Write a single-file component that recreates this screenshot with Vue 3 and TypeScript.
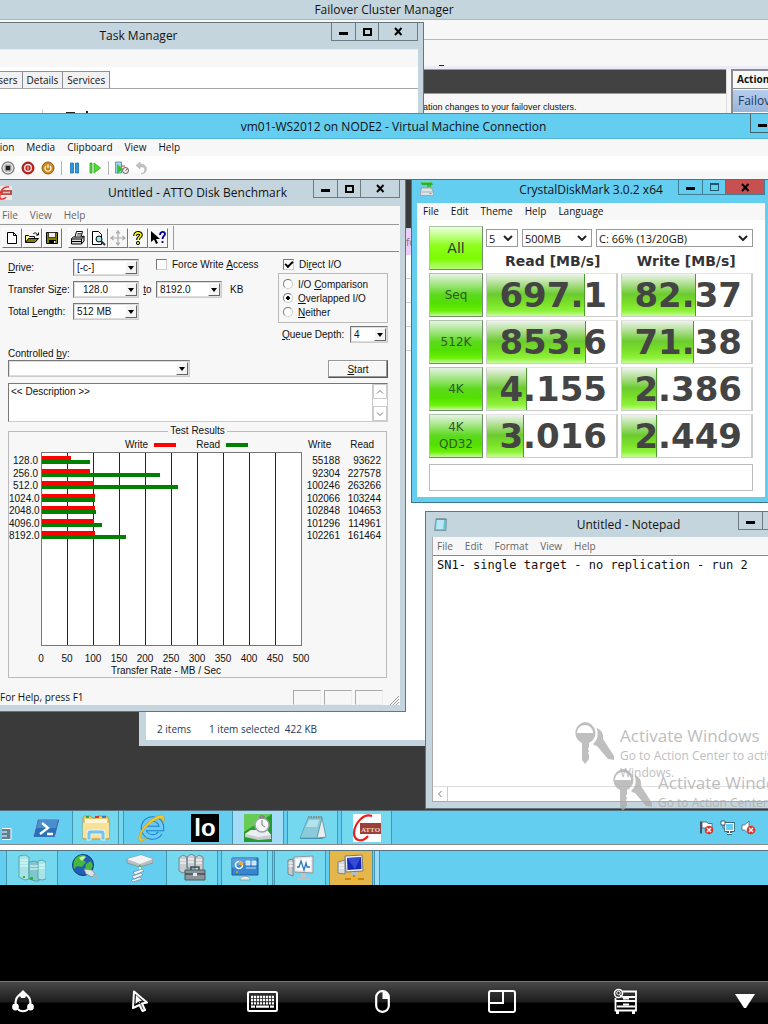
<script setup lang="ts">
import { ref } from 'vue'

interface AttoRow { size: string; write: number; read: number }
interface CrystalRow { label: string[]; read: string; readPct: number; write: string; writePct: number }

const attoRows: AttoRow[] = [
  { size: '128.0', write: 55188, read: 93622 },
  { size: '256.0', write: 92304, read: 227578 },
  { size: '512.0', write: 100246, read: 263266 },
  { size: '1024.0', write: 102066, read: 103244 },
  { size: '2048.0', write: 102848, read: 104653 },
  { size: '4096.0', write: 101296, read: 114961 },
  { size: '8192.0', write: 102261, read: 161464 },
]
const ticks: number[] = [0, 50, 100, 150, 200, 250, 300, 350, 400, 450, 500]
const pct = (kb: number): string => `${kb / 5000}%`

const crystalRows: CrystalRow[] = [
  { label: ['Seq'], read: '697.1', readPct: 76, write: '82.37', writePct: 57 },
  { label: ['512K'], read: '853.6', readPct: 77, write: '71.38', writePct: 56 },
  { label: ['4K'], read: '4.155', readPct: 31, write: '2.386', writePct: 27 },
  { label: ['4K', 'QD32'], read: '3.016', readPct: 29, write: '2.449', writePct: 27 },
]

const vmMenu: string[] = ['Action', 'Media', 'Clipboard', 'View', 'Help']
const attoMenu: string[] = ['File', 'View', 'Help']
const crystalMenu: string[] = ['File', 'Edit', 'Theme', 'Help', 'Language']
const notepadMenu: string[] = ['File', 'Edit', 'Format', 'View', 'Help']

const ioMode = ref<string>('overlapped')
const directIo = ref<boolean>(true)
const forceWrite = ref<boolean>(false)
const description = ref<string>('<< Description >>')
const note = ref<string>('SN1- single target - no replication - run 2')
</script>

<template>
  <div class="page">
    <!-- Host: Failover Cluster Manager with Task Manager in front -->
    <section class="failover">
      <header class="fc-title">Failover Cluster Manager</header>
      <div class="fc-menu"></div>
      <div class="fc-tools"><i></i></div>
      <div class="fc-body">
        <div class="fc-main">
          <div class="fc-band"></div>
          <p class="fc-text">ation changes to your failover clusters.</p>
        </div>
        <aside class="fc-actions">
          <h2>Actions</h2>
          <a href="#">Failover Cluster Manager</a>
        </aside>
      </div>

      <section class="win taskman">
        <header class="title">
          <span class="caption">Task Manager</span>
          <div class="ctl">
            <button aria-label="Minimize"><i class="g-min"></i></button>
            <button aria-label="Maximize"><i class="g-max"></i></button>
            <button class="wide" aria-label="Close"><svg viewBox="0 0 9 9"><path d="M1 1l6.500 7M7.500 1L1 8" /></svg></button>
          </div>
        </header>
        <div class="tm-body">
          <div class="tm-menu"></div>
          <div class="tm-tabs">
            <button>Users</button><button>Details</button><button>Services</button>
          </div>
          <div class="tm-pane"><i class="tm-a"></i><i class="tm-b"></i><i class="tm-c"></i></div>
        </div>
      </section>
    </section>

    <!-- Host: Virtual Machine Connection -->
    <section class="vm">
      <header class="vm-title">
        <span>vm01-WS2012 on NODE2 - Virtual Machine Connection</span>
        <button aria-label="Minimize"><i class="g-min"></i></button>
      </header>
      <nav class="menu vm-menu">
        <a v-for="m in vmMenu" :key="m" href="#">{{ m }}</a>
      </nav>
      <div class="vm-tools">
        <button aria-label="Turn off">
          <svg viewBox="0 0 14 14"><circle cx="7" cy="7" r="6" fill="#eee" stroke="#8a8a8a" stroke-width="1.500" /><circle cx="7" cy="7" r="4" fill="#fff" stroke="#bbb" /><path d="M4.500 4.500h5v5h-5z" fill="#222" /></svg>
        </button>
        <button aria-label="Shut down">
          <svg viewBox="0 0 14 14"><circle cx="7" cy="7" r="6" fill="#c5261f" stroke="#8e1a15" /><circle cx="7" cy="7" r="3.300" fill="none" stroke="#fff" stroke-width="1.200" /><path d="M7 5.500v3" stroke="#fff" /></svg>
        </button>
        <button aria-label="Save">
          <svg viewBox="0 0 14 14"><circle cx="7" cy="7" r="6" fill="#d08a1c" stroke="#8b5a10" /><path d="M5 5a3 3 0 1 0 4 0M7 3.500v3.500" fill="none" stroke="#fff" stroke-width="1.200" /></svg>
        </button>
        <i class="vsep"></i>
        <button aria-label="Pause">
          <svg viewBox="0 0 14 14"><path d="M2.500 2h3v10h-3zM7.500 2h3v10h-3z" fill="#2b9be0" stroke="#1c6fb0" stroke-width=".8" /></svg>
        </button>
        <button aria-label="Reset">
          <svg viewBox="0 0 14 14"><path d="M2 2h2v10H2zM6 2l6.500 5L6 12z" fill="#55dd3c" stroke="#2ba31c" stroke-width=".8" /></svg>
        </button>
        <i class="vsep"></i>
        <button aria-label="Checkpoint">
          <svg viewBox="0 0 14 14"><path d="M.500 1h6v11h-6z" fill="#9fd8e6" stroke="#4d8aa0" stroke-width=".8" /><path d="M2 3l6 5-6 5z" fill="#38c52a" /><circle cx="10.500" cy="9.500" r="3" fill="#eee" stroke="#555" /><path d="M10.500 9.500L12.500 8M6 5h4" stroke="#c33" /></svg>
        </button>
        <button aria-label="Revert">
          <svg viewBox="0 0 14 14"><path d="M5 1L1 4.500 5 8V6c4-.5 6 1 4 5.500L6 13c7 0 8-10-1-10z" fill="#c2c2c2" stroke="#b4b4b4" stroke-width=".6" /></svg>
        </button>
      </div>

      <!-- Guest desktop -->
      <div class="desktop">
        <section class="win explorer">
          <div class="ex-body">
            <div class="ex-side"><b>fo</b><i></i><i></i><i></i><i></i></div>
            <footer class="ex-status"><span>2 items</span><span>1 item selected&nbsp; 422 KB</span></footer>
          </div>
        </section>

        <!-- ATTO -->
        <section class="win atto">
          <header class="title">
            <svg class="atto-ico" viewBox="0 0 14 14"><path d="M0 0h14v14H0z" fill="#f4e4e4" /><path d="M11 1C5 0 1 6 2 12c1 2 5 1 6-1" fill="none" stroke="#f02828" stroke-width="1.400" /><path d="M3 4h11v5H3z" fill="#b2544e" /><path d="M5 6.500h7" stroke="#e8b8b4" stroke-width="1.500" /></svg>
            <span class="caption">Untitled - ATTO Disk Benchmark</span>
            <div class="ctl">
              <button aria-label="Minimize"><i class="g-min"></i></button>
              <button aria-label="Maximize"><i class="g-max"></i></button>
              <button class="wide" aria-label="Close"><svg viewBox="0 0 9 9"><path d="M1 1l6.500 7M7.500 1L1 8" /></svg></button>
            </div>
          </header>
          <div class="atto-body">
            <nav class="menu grey atto-menu"><a v-for="m in attoMenu" :key="m" href="#">{{ m }}</a></nav>
            <div class="atto-tools">
              <button aria-label="New"><svg viewBox="0 0 16 16"><path d="M3.500 2.500h6l3 3v8h-9zM9.500 2.500v3h3" fill="#fff" stroke="#000" /></svg></button>
              <button aria-label="Open"><svg viewBox="0 0 16 16"><path d="M1.500 12.500v-7h3l1 1h5v2" fill="#ffff80" stroke="#000" /><path d="M1.500 12.500l3-4h10l-3.500 4z" fill="#808000" stroke="#000" /><path d="M9 4c2-2 4-1 4.500 1M12 5h2.500V2.500" fill="none" stroke="#000" /></svg></button>
              <button aria-label="Save"><svg viewBox="0 0 16 16"><path d="M2.500 2.500h11v11h-11z" fill="#808000" stroke="#000" /><path d="M4.500 2.500h7v5h-7z" fill="#eee" stroke="#000" stroke-width=".6" /><path d="M5 10h7v4H5z" /><path d="M10 11h1.500v2H10z" fill="#fff" /></svg></button>
              <i class="tgap"></i>
              <button aria-label="Print"><svg viewBox="0 0 16 16"><path d="M5 7l1.500-5.500h6L11 7" fill="#fff" stroke="#000" /><path d="M7.500 3.500h4M7 5h4" stroke="#000" stroke-width=".7" /><path d="M1.500 8.500l2-1.500h8l2.500-1v5l-2.500 3h-10z" fill="#ddd" stroke="#000" /><path d="M2 9h9.500M2 11.500h9.500M11.500 9v5M11.500 9L14 6.500" fill="none" stroke="#000" /></svg></button>
              <button aria-label="Print preview"><svg viewBox="0 0 16 16"><path d="M2.500 1.500h6l3 3v10h-9z" fill="#fff" stroke="#000" /><circle cx="9" cy="9" r="3" fill="#a0e8e8" stroke="#000" /><path d="M11 11l4 4" stroke="#333" stroke-width="2" /></svg></button>
              <button aria-label="Move"><svg viewBox="0 0 16 16"><path d="M8 1v14M1 8h14M6 3.500L8 1l2 2.500M6 12.500L8 15l2-2.500M3.500 6L1 8l2.500 2M12.500 6L15 8l-2.500 2" fill="none" stroke="#aaa" stroke-width="1.200" /></svg></button>
              <button aria-label="About"><svg viewBox="0 0 16 16"><path d="M5 6c0-4 6-4 6-1 0 2-3 2-3 5" fill="none" stroke="#000" stroke-width="3.600" /><path d="M5 6c0-4 6-4 6-1 0 2-3 2-3 5" fill="none" stroke="#ffff00" stroke-width="1.600" /><circle cx="8" cy="13" r="1.600" fill="#ff0" stroke="#000" /></svg></button>
              <button aria-label="Context help"><svg viewBox="0 0 16 16"><path d="M1 1v11l3-2.500L6 14l2-1-2-4h4z" /><path d="M10 5c0-4 5-4 5-1 0 2-2.500 2-2.500 5M12.500 11v2" fill="none" stroke="#00008b" stroke-width="1.800" /></svg></button>
              <i class="tend"></i>
            </div>

            <form class="atto-form" @submit.prevent>
              <div class="top">
                <div class="left">
                  <div class="row">
                    <label class="lab" for="drive"><u>D</u>rive:</label>
                    <div class="combo w66"><select id="drive"><option>[-c-]</option></select><i class="arr"></i></div>
                    <label class="check fwa"><input v-model="forceWrite" type="checkbox">Force Write <u>A</u>ccess</label>
                  </div>
                  <div class="row">
                    <label class="lab" for="from">Transfer Si<u>z</u>e:</label>
                    <div class="combo w66 ind"><select id="from"><option>128.0</option></select><i class="arr"></i></div>
                    <label class="to" for="upto"><u>t</u>o</label>
                    <div class="combo w66"><select id="upto"><option>8192.0</option></select><i class="arr"></i></div>
                    <span class="kb">KB</span>
                  </div>
                  <div class="row">
                    <label class="lab" for="total">Total <u>L</u>ength:</label>
                    <div class="combo w66"><select id="total"><option>512 MB</option></select><i class="arr"></i></div>
                  </div>
                </div>
                <div class="right">
                  <label class="check dio"><input v-model="directIo" type="checkbox">Di<u>r</u>ect I/O</label>
                  <div class="modes">
                    <label><input v-model="ioMode" type="radio" name="io" value="comparison">I/O <u>C</u>omparison</label>
                    <label><input v-model="ioMode" type="radio" name="io" value="overlapped"><span><u>O</u>verlapped I/O</span></label>
                    <label><input v-model="ioMode" type="radio" name="io" value="neither"><span><u>N</u>either</span></label>
                  </div>
                  <div class="queue">
                    <label for="queue"><u>Q</u>ueue Depth:</label>
                    <div class="combo w38"><select id="queue"><option>4</option></select><i class="arr"></i></div>
                  </div>
                </div>
              </div>
              <label class="ctrl" for="controlled">Controlled <u>b</u>y:</label>
              <div class="startrow">
                <div class="combo w182"><select id="controlled"><option></option></select><i class="arr"></i></div>
                <button class="start"><u>S</u>tart</button>
              </div>
              <div class="desc">
                <textarea v-model="description" aria-label="Description"></textarea>
                <div class="dscroll">
                  <button aria-label="Scroll up"><svg viewBox="0 0 8 8"><path d="M1 5.500L4 2.500l3 3" /></svg></button>
                  <button aria-label="Scroll down"><svg viewBox="0 0 8 8"><path d="M1 2.500L4 5.500l3-3" /></svg></button>
                </div>
              </div>
            </form>

            <fieldset class="results">
              <legend>Test Results</legend>
              <div class="legend">
                <span>Write</span><i class="red"></i><span>Read</span><i class="green"></i>
                <b class="hw">Write</b><b class="hr">Read</b>
              </div>
              <div class="chart">
                <div class="col sizes"><span v-for="r in attoRows" :key="r.size">{{ r.size }}</span></div>
                <div class="plot">
                  <div class="bars">
                    <div v-for="r in attoRows" :key="r.size" class="pair">
                      <i class="red" :style="{ width: pct(r.write) }"></i>
                      <i class="green" :style="{ width: pct(r.read) }"></i>
                    </div>
                  </div>
                </div>
                <div class="col"><span v-for="r in attoRows" :key="r.size">{{ r.write }}</span></div>
                <div class="col"><span v-for="r in attoRows" :key="r.size">{{ r.read }}</span></div>
              </div>
              <div class="axis"><span v-for="t in ticks" :key="t">{{ t }}</span></div>
              <div class="axlabel">Transfer Rate - MB / Sec</div>
            </fieldset>

            <footer class="atto-status">
              <span>For Help, press F1</span><i></i><i></i><i></i>
              <svg viewBox="0 0 10 10"><path d="M1 10l9-9M4 10l6-6M7 10l3-3" stroke="#999" /></svg>
            </footer>
          </div>
        </section>

        <!-- CrystalDiskMark -->
        <section class="win crystal">
          <header class="title">
            <svg class="cdm-ico" viewBox="0 0 15 15"><path d="M1 0h11l2 4H3z" fill="#2fae2a" /><path d="M1 0h11l1 1.500H1.500z" fill="#8be07c" /><path d="M8 4h4v2H8z" fill="#3fbf38" /><path d="M2.500 7h10l2 4v3.500h-13V11z" fill="#dfe3e6" stroke="#8b979d" stroke-width=".7" /><path d="M1.500 11h13" stroke="#a9b2b7" /><path d="M10.500 12.500h2" stroke="#4fbf4a" /></svg>
            <span class="caption">CrystalDiskMark 3.0.2 x64</span>
            <div class="ctl">
              <button aria-label="Minimize"><i class="g-min"></i></button>
              <button class="off" aria-label="Maximize"><i class="g-max"></i></button>
              <button class="wide close" aria-label="Close"><svg viewBox="0 0 9 9"><path d="M1 1l6.500 7M7.500 1L1 8" /></svg></button>
            </div>
          </header>
          <div class="cdm-body">
            <nav class="menu cdm-menu"><a v-for="m in crystalMenu" :key="m" href="#">{{ m }}</a></nav>
            <div class="cdm-grid">
              <button class="gb all">All</button>
              <div class="cdm-head">
                <div class="pickers">
                  <div class="pick p1"><select aria-label="Test count"><option>5</option></select><svg viewBox="0 0 10 6"><path d="M1 1l4 4 4-4" /></svg></div>
                  <div class="pick p2"><select aria-label="Test size"><option>500MB</option></select><svg viewBox="0 0 10 6"><path d="M1 1l4 4 4-4" /></svg></div>
                  <div class="pick p3"><select aria-label="Drive"><option>C: 66% (13/20GB)</option></select><svg viewBox="0 0 10 6"><path d="M1 1l4 4 4-4" /></svg></div>
                </div>
                <div class="heads"><b>Read [MB/s]</b><b>Write [MB/s]</b></div>
              </div>
              <template v-for="r in crystalRows" :key="r.read">
                <button class="gb"><span v-for="l in r.label" :key="l">{{ l }}</span></button>
                <div class="cell"><i :style="{ width: r.readPct + '%' }"></i><b>{{ r.read }}</b></div>
                <div class="cell"><i :style="{ width: r.writePct + '%' }"></i><b>{{ r.write }}</b></div>
              </template>
            </div>
            <input class="cdm-note" type="text" aria-label="Comment">
          </div>
        </section>

        <!-- Notepad -->
        <section class="win notepad">
          <header class="title">
            <svg class="np-ico" viewBox="0 0 14 14"><path d="M2 2h10.500l-.5 11.500H.500z" fill="#6fc4d8" stroke="#6a8a94" stroke-width=".7" /><path d="M3 3h7l-1 9H2z" fill="#b9e8f2" /><path d="M3 1v2M5 1v2M7 1v2M9 1v2M11 1v2" stroke="#66777d" stroke-width=".8" /></svg>
            <span class="caption">Untitled - Notepad</span>
            <div class="ctl">
              <button aria-label="Minimize"><i class="g-min"></i></button>
              <button aria-label="Maximize"><i class="g-max"></i></button>
              <button class="wide" aria-label="Close"><svg viewBox="0 0 9 9"><path d="M1 1l6.500 7M7.500 1L1 8" /></svg></button>
            </div>
          </header>
          <div class="np-body">
            <nav class="menu grey np-menu"><a v-for="m in notepadMenu" :key="m" href="#">{{ m }}</a></nav>
            <textarea v-model="note" aria-label="Text" spellcheck="false"></textarea>
            <div class="np-scroll"><button aria-label="Scroll left"><svg viewBox="0 0 8 8"><path d="M5.500 1L2.500 4l3 3" /></svg></button></div>
          </div>
        </section>

        <!-- Activation watermarks: host and guest -->
        <div v-for="n in 2" :key="n" class="mark" :class="'mark' + n">
          <svg viewBox="0 0 40 42">
            <path d="M22 6c5 1 8 6 7 11l2 3 9 14v4l-6-1-11-13c-1 0-3-1-4-2 5-4 6-11 3-17z" />
            <path fill-rule="evenodd" d="M11 0a11 11 0 0 1 4 21v4l-1 2 1 2-1 2 1 2v4l-4 5-3-4V21A11 11 0 0 1 11 0zM3 11h16c0-5-4-8-8-8s-8 3-8 8z" />
          </svg>
          <div><strong>Activate Windows</strong><span>Go to Action Center to activate</span><span v-if="n === 1">Windows.</span></div>
        </div>
      </div>

      <!-- Guest taskbar -->
      <nav class="bar guest">
        <button class="s20" aria-label="Server Manager"><svg class="clip" viewBox="0 0 10 12"><path d="M-1 .500h10v11H-1z" fill="#5b8196" stroke="#fff" /><path d="M0 4h5M0 8h5" stroke="#fff" /></svg></button>
        <button class="s52" aria-label="PowerShell">
          <svg class="i28" viewBox="0 0 28 28"><path d="M7 5h19a1.500 1.500 0 0 1 1.500 2l-4 15a2 2 0 0 1-2 1.500H3A1.500 1.500 0 0 1 1.500 21L5 7a2 2 0 0 1 2-2z" fill="#2a70b8" stroke="#8cc3ea" /><path d="M7 6h19l-2 8H4z" fill="#5fa3dc" opacity=".6" /><path d="M10 9l6 5-8 6M15 20h6" fill="none" stroke="#fff" stroke-width="2.400" /></svg>
        </button>
        <button class="s47 open stack" aria-label="File Explorer">
          <svg class="i28" viewBox="0 0 28 28"><path d="M1 4l1-2h7l1 2h4l1-2h10l2 3v20H1z" fill="#ecca72" stroke="#b98f35" stroke-width=".8" /><path d="M3 5h22v4H3z" fill="#fff6cf" /><path d="M4 2h3v2H4z" fill="#2ca34c" /><path d="M13 2h4v2h-4z" fill="#d33" /><path d="M20 2h4v2h-4z" fill="#2b7fd0" /><path d="M1 9h26v15H1z" fill="#f7e29a" /><path d="M5 26v-7a3 3 0 0 1 3-3h12a3 3 0 0 1 3 3v7h-4v-6H9v6z" fill="#78c4ea" stroke="#e6f6ff" stroke-width=".9" /></svg>
        </button>
        <button class="s54" aria-label="Internet Explorer">
          <svg class="i28" viewBox="0 0 28 28"><path d="M23 19a9 9 0 1 1 1.500-4.500H8" fill="none" stroke="#1a7fc8" stroke-width="5.500" /><path d="M23 19a9 9 0 1 1 1.500-4.500H8" fill="none" stroke="#6ccbf6" stroke-width="3.500" /><path d="M3 27C-3 21 14 2 24 1c4 0 4 5 2 8 0-4-1-6-5-4C11 9 2 20 4 24c1 2 4 1 7-1-3 3-6 5-8 4z" fill="#f6c92c" stroke="#c48f12" stroke-width=".5" /></svg>
        </button>
        <button class="s54" aria-label="Iometer"><span class="lo">lo</span></button>
        <button class="s52 open active" aria-label="CrystalDiskMark">
          <svg class="i28" viewBox="0 0 28 28"><path d="M0 0h28v28H0z" fill="#259a2d" /><path d="M28 0L0 18V0z" fill="#67cb55" /><path d="M1 20l6-4h16l4 5v4l-13 1-13-3z" fill="#c7ccd0" /><path d="M1 20l6-4h16l4 5-13 2z" fill="#eceff1" /><circle cx="18" cy="11" r="7" fill="#f5f7f8" stroke="#9aa5a9" stroke-width="1.500" /><path d="M18 11V6M18 11l3 2M16 2h4v2h-4z" stroke="#777" fill="#aaa" /></svg>
        </button>
        <button class="s50 open shift" aria-label="Notepad">
          <svg class="i28" viewBox="0 0 28 28"><path d="M9 4h14l4 19-4 2H1z" fill="#3e93ad" /><path d="M9 4h14l-5 20H1z" fill="#8acbdb" stroke="#4f9db2" stroke-width=".7" /><path d="M10 6h10l-2 7H7z" fill="#d2f1f6" opacity=".6" /><path d="M23 4l4 19-9 1z" fill="#e6eef0" stroke="#5f8d9b" stroke-width=".7" /><path d="M9 3h15" stroke="#8b8a7a" stroke-width="2" stroke-dasharray="1.500 1" /></svg>
        </button>
        <button class="s50 open shift" aria-label="ATTO Disk Benchmark">
          <svg class="i28" viewBox="0 0 28 28"><path d="M0 0h28v28H0z" fill="#fff" /><path d="M19 2C10-1 1 10 1 20c1 8 9 8 14 2" fill="none" stroke="#ee1c1c" stroke-width="2.200" /><path d="M7 9h21v11H7z" fill="#9c3f39" /><text x="17.500" y="17.500" text-anchor="middle" font-size="7" font-weight="bold" font-family="Liberation Serif, serif" fill="#e9d3cf">ATTO</text></svg>
        </button>
        <div class="tray">
          <button aria-label="Action Center"><svg viewBox="0 0 15 15"><path d="M2 1.500v12" stroke="#456" stroke-width="2" /><path d="M3 2h5l1 1.500h4V9H8L7 8H3z" fill="#fff" stroke="#456" stroke-width=".8" /><circle cx="10" cy="10" r="4.300" fill="#e03428" /><path d="M8 8l4 4M12 8l-4 4" stroke="#fff" stroke-width="1.400" /></svg></button>
          <button aria-label="Network"><svg viewBox="0 0 15 15"><path d="M5.500 3.500h8v7h-8zM9.500 10.500v3M7 13.500h5" fill="#63cef0" stroke="#345" stroke-width="2.400" /><path d="M5.500 3.500h8v7h-8zM9.500 10.500v3M7 13.500h5" fill="#63cef0" stroke="#fff" stroke-width="1.200" /><path d="M1 1h4v4H1zM3 5v3h2" fill="#fff" stroke="#345" stroke-width=".8" /></svg></button>
          <button aria-label="Volume"><svg viewBox="0 0 15 15"><path d="M1 5h2.500L8 1v13l-4.500-4H1z" fill="#fff" stroke="#567" stroke-width=".8" /><circle cx="10" cy="10" r="4.300" fill="#e03428" /><path d="M8 8l4 4M12 8l-4 4" stroke="#fff" stroke-width="1.400" /></svg></button>
        </div>
      </nav>
    </section>

    <div class="gapline"></div>

    <!-- Host taskbar -->
    <nav class="bar host">
      <button class="s52 open lead" aria-label="Server Manager">
        <svg class="i28" viewBox="0 0 28 28"><path d="M1 2l6-1 4 2v22l-4 1-6-3z" fill="#a8e3e6" stroke="#4c9aa2" stroke-width=".8" /><path d="M11 8l6-1 4 2v18l-4 0-6-2z" fill="#7fc6cd" stroke="#4c9aa2" stroke-width=".8" /><path d="M20 7l4-1 4 2v17l-4 1-4-1z" fill="#a8e3e6" stroke="#4c9aa2" stroke-width=".8" /><path d="M2 6h8M2 9h8M2 12h8M12 12h8M12 15h8M21 11h6M21 14h6" stroke="#e8ffff" /><path d="M12 23h3v3h-3zM5 22h2v2H5z" fill="#28b838" /></svg>
      </button>
      <button class="s54" aria-label="Network">
        <svg class="i28" viewBox="0 0 28 28"><circle cx="12" cy="11" r="10.500" fill="#1d5fb4" stroke="#0d3a78" /><path d="M4 5c3-4 8-5 11-3l-3 4 3 2-4 5-5-1-3 3C2 12 2 8 4 5zM15 10l5-3 2 5-4 6-4-3z" fill="#47b83a" /><path d="M8 4c3-2 5-2 7-1l-4 4z" fill="#c6f3a8" /><path d="M13 15l8 1 3 4-3 3-6-3z" fill="#dfe3e6" stroke="#7b868b" stroke-width=".8" /><path d="M22 21c5 0 5 5 1 5" fill="none" stroke="#aab4b9" stroke-width="1.800" /></svg>
      </button>
      <button class="s54" aria-label="Storage">
        <svg class="i28" viewBox="0 0 28 28"><path d="M2 5l14-4 12 4v4l-13 4L2 9z" fill="#b8bfc3" stroke="#7b868b" stroke-width=".7" /><path d="M2 5l14-4 12 4-13 5z" fill="#f1f3f4" /><path d="M14 11h2v2h-2z" fill="#3fc23a" /><path d="M15 13v4" stroke="#fff" stroke-width="1.500" /><path d="M8 18l9-3 2 2-9 4zM7 22l9-3 2 2-9 4zM6 26l9-3 2 2-9 3z" fill="#eef3f7" stroke="#7090a8" stroke-width=".8" /></svg>
      </button>
      <button class="s52 open" aria-label="Failover Cluster Manager">
        <svg class="i28" viewBox="0 0 28 28"><path d="M1 4l4-3 4 2v14l-4 2-4-2zM9 3l4-3 4 2v12H9zM17 4l4-3 4 2v14h-8z" fill="#c7cdd0" stroke="#6a7478" stroke-width=".8" /><path d="M2 6h6M2 9h6M10 5h6M10 8h6M18 6h6M18 9h6" stroke="#fff" /><path d="M7 16h20v10H7z" fill="#8b9499" stroke="#525a5e" /><path d="M13 16v-3h8v3M7 20h20" fill="none" stroke="#444c50" stroke-width="1.500" /><path d="M15 19h4v3h-4z" fill="#e5e9eb" /></svg>
      </button>
      <button class="s47 open stack shift" aria-label="Control Panel">
        <svg class="i28" viewBox="0 0 28 28"><path d="M1 4h26v17H1z" fill="#3586cf" stroke="#1f5a96" /><path d="M1 4h26L1 14z" fill="#6db3ec" opacity=".6" /><circle cx="8" cy="11" r="3.500" fill="none" stroke="#fff" stroke-width="1.500" /><path d="M8 11V7a4 4 0 0 1 4 4z" fill="#f5a623" /><path d="M15 7h4v4h-4zM21 7h4v4h-4zM15 14h10" fill="#bfe0fa" stroke="#e8f5ff" stroke-width=".8" /><circle cx="6" cy="18" r="1" fill="#f90" /><path d="M9 26c0-5 10-5 10 0z" fill="#e7eaec" stroke="#8b979d" stroke-width=".8" /></svg>
      </button>
      <button class="s52 open gap1" aria-label="Task Manager">
        <svg class="i28" viewBox="0 0 28 28"><path d="M2 6l5-1v17l-5-2z" fill="#c7cdd0" stroke="#6a7478" stroke-width=".8" /><path d="M2.500 9H7M2.500 12H7" stroke="#fff" /><path d="M8 3l19-1v17l-19-1z" fill="#e4e8ea" stroke="#8b979d" /><path d="M10 5l15-1v13l-15-1z" fill="#f7fbff" /><path d="M11 13h2l2-6 3 9 2-7 1 4h3" fill="none" stroke="#2b78c2" stroke-width="1.300" /><path d="M15 19h5v4h-5zM11 24h13v2H11z" fill="#bcc4c8" /></svg>
      </button>
      <button class="s44 open amber shift" aria-label="Virtual Machine Connection">
        <svg class="i28" viewBox="0 0 28 28"><path d="M1 8l7-2v14l-7-1z" fill="#d5dadd" stroke="#6a7478" stroke-width=".8" /><path d="M2 11h5M2 14h5" stroke="#fff" /><path d="M8 2l17-1 1 16-17 1z" fill="#eceff0" stroke="#777" /><path d="M10 4l14-1 .5 12-14 1z" fill="#1226b8" /><path d="M10 4l14-1-6 12z" fill="#4b66e8" opacity=".6" /><path d="M15 18h6v3h-6z" fill="#bbb" /><path d="M8 25h19M17 21v4" stroke="#c8860c" stroke-width="2" /><path d="M14 23h7v4h-7z" fill="#eeb431" /></svg>
      </button>
      <i class="tail"></i>
    </nav>

    <div class="void"></div>

    <!-- Remote client toolbar -->
    <nav class="client">
      <button aria-label="Session"><svg width="22" height="23" viewBox="0 0 22 23"><path d="M9 4C3 7 3 12 4 16M13 4c6 3 6 8 5 12M6 19c2 3 8 3 10 0" fill="none" stroke="#fff" stroke-width="2" /><path d="M11 0l4 4-2 4H9L7 4z" /><circle cx="3.500" cy="17" r="3.400" /><circle cx="18.500" cy="17" r="3.400" /></svg></button>
      <button aria-label="Pointer"><svg width="19" height="22" viewBox="0 0 19 22"><path d="M3 1.500l13 11-5 1 3 6.500-2.500 1-3-6L2 18z" fill="none" stroke="#fff" stroke-width="2" stroke-linejoin="round" /><path d="M5 5l6 6-3 0 4.500 8.500-5-8L4.500 14z" /></svg></button>
      <button aria-label="Keyboard"><svg width="31" height="21" viewBox="0 0 31 21"><rect x="1" y="1" width="29" height="19" rx="1.500" fill="none" stroke="#fff" stroke-width="2" /><path d="M4 6h23M4 9.200h23M4 12.400h23" stroke="#fff" stroke-width="2.300" stroke-dasharray="2.200 .8" /><path d="M4 15.600h4M9 15.600h13M23 15.600h4" stroke="#fff" stroke-width="2.300" /></svg></button>
      <button aria-label="Mouse"><svg width="15" height="23" viewBox="0 0 15 23"><rect x="1.200" y="1.200" width="12.600" height="20.600" rx="6" fill="none" stroke="#fff" stroke-width="2.200" /><path d="M7.500 1c4 0 6.500 2 6.500 8H7.500z" /></svg></button>
      <button aria-label="Screens"><svg width="28" height="23" viewBox="0 0 28 23"><path d="M3 1h22a2 2 0 0 1 2 2v17a2 2 0 0 1-2 2H3a2 2 0 0 1-2-2V3a2 2 0 0 1 2-2zM15 1v12H1" fill="none" stroke="#fff" stroke-width="2" /></svg></button>
      <button aria-label="Files"><svg width="25" height="27" viewBox="0 0 25 27"><path d="M9 3.500h14v19H2.500V10M3 13h20M4 18.500h18M10 9h12" fill="none" stroke="#fff" stroke-width="1.800" /><path d="M10 9.500h6v2h-6zM10 15.500h6v2h-6zM3 23h3v3H3zM19 23h3v3h-3z" /><circle cx="5.500" cy="5.500" r="4" fill="none" stroke="#fff" stroke-width="1.600" /><circle cx="5.500" cy="5" r="1.800" fill="none" stroke="#fff" /><path d="M7 7l5 4" stroke="#fff" stroke-width="1.600" /></svg></button>
      <button aria-label="Hide"><svg width="20" height="16" viewBox="0 0 20 16"><path d="M0 1h20L11 15H9z" /></svg></button>
    </nav>
  </div>
</template>

<style>
body { margin: 0; background: #000; }
</style>

<style scoped>
* { box-sizing: border-box; }
.page { min-height: 100vh; display: flex; flex-direction: column; overflow: hidden; background: #000; font-family: "Open Sans", "Noto Sans", sans-serif; font-size: 10px; color: #111; }
button, select, input, textarea { font: inherit; color: inherit; margin: 0; padding: 0; border: 0; border-radius: 0; background: none; }
a { color: inherit; text-decoration: none; }
i { display: block; font-style: normal; }
svg { display: block; }

/* Failover Cluster Manager */
.failover { position: relative; height: 113px; overflow: hidden; background: #f7f7f7; display: flex; flex-direction: column; }
.fc-title { flex: none; height: 20px; line-height: 20px; text-align: center; font-size: 12px; background: #c5d5dd; border-bottom: 1px solid #aab9c2; }
.fc-menu { flex: none; height: 20px; border-bottom: 1px solid #b4b8c2; }
.fc-tools { flex: none; height: 29px; padding: 25px 0 0 439px; border-bottom: 3px solid #ececf8; }
.fc-tools i { width: 5px; height: 1px; background: #222; }
.fc-body { flex: 1; min-height: 0; display: flex; gap: 4px; }
.fc-main { flex: 1; border-right: 1px solid #ddd; }
.fc-band { height: 25px; background: #424242; border: 1px solid #999; border-width: 1px 0; }
.fc-text { margin: 0; padding-left: 423px; line-height: 26px; font-family: "Liberation Sans", sans-serif; font-size: 9px; white-space: nowrap; }
.fc-actions { width: 37px; overflow: hidden; white-space: nowrap; border: 2px solid #8b8b92; border-width: 2px 0 0 2px; }
.fc-actions h2 { margin: 0; padding-left: 4px; font-size: 10px; line-height: 17px; border-bottom: 1px solid #888; }
.fc-actions a { display: block; margin-top: 1px; padding-left: 5px; font-size: 12px; line-height: 22px; color: #1d3a5c; background: linear-gradient(#b6cdec, #9ab5dc); }

/* Window chrome */
.win { position: absolute; display: flex; flex-direction: column; background: #c5d5dd; border: 1px solid #66757c; }
.title { display: grid; grid-template-columns: 1fr; }
.title > * { grid-area: 1 / 1; }
.caption { text-align: center; font-size: 12px; white-space: nowrap; }
.ctl { justify-self: end; align-self: start; display: flex; border: 1px solid #6d7c83; border-top: 0; }
.ctl button { width: 23px; height: 17px; display: grid; place-items: center; }
.ctl button + button { border-left: 1px solid #6d7c83; }
.ctl .wide { width: 39px; }
.ctl svg { width: 9px; height: 9px; fill: none; stroke: #000; stroke-width: 2; }
.g-min { width: 9px; height: 3px; margin-top: 4px; background: #000; }
.g-max { width: 9px; height: 8px; border: 2px solid #000; }
.menu { display: flex; white-space: nowrap; background: #f7f7f7; }
.menu.grey { color: #666; }

.taskman { left: -147px; top: 22px; width: 571px; height: 120px; padding: 0 5px; }
.taskman .title { height: 26px; }
.taskman .caption { line-height: 26px; }
.tm-body { flex: 1; background: #fff; border-top: 1px solid #e6eef2; }
.tm-menu { height: 17px; background: #f7f7f7; }
.tm-tabs { display: flex; height: 22px; padding: 4px 0 0 127px; border-bottom: 1px solid #a8a8a8; }
.tm-tabs button { padding: 0 4px; border: 1px solid #8e8e98; border-bottom: 0; margin-right: -1px; background: #f1f1f3; }
.tm-pane { display: flex; align-items: flex-end; height: 25px; padding-left: 183px; }
.tm-a { width: 1px; height: 5px; background: #ccc; }
.tm-b { width: 9px; height: 2px; margin-left: 23px; background: #222; }
.tm-c { width: 2px; height: 3px; margin-left: 11px; background: #222; }

/* VM Connection */
.vm { background: #f7f7f7; }
.vm-title { display: grid; height: 26px; background: #63cef0; border-top: 1px solid #5b8796; border-bottom: 1px solid #55b7d8; }
.vm-title > * { grid-area: 1 / 1; }
.vm-title span { padding-left: 19px; text-align: center; font-size: 12px; line-height: 25px; }
.vm-title button { justify-self: end; width: 18px; height: 19px; padding-left: 7px; overflow: hidden; border: 1px solid #47616c; border-width: 0 0 1px 1px; }
.vm-menu { gap: 12px; margin-left: -15px; line-height: 17px; }
.vm-tools { display: flex; align-items: center; height: 24px; gap: 6px; padding-left: 1px; background: linear-gradient(#fff 0 13px, #f7f7f7 17px); border-bottom: 1px solid #5f6e74; }
.vm-tools svg { width: 14px; height: 14px; }
.vsep { width: 1px; height: 14px; background: #b5b5b5; }

.desktop { position: relative; height: 630px; overflow: hidden; background: #3a3a3a; }
.explorer { left: 139px; right: -12px; top: 48px; height: 518px; padding: 0 0 5px 6px; border-color: #c5d5dd; }
.ex-body { flex: 1; display: flex; flex-direction: column; background: #fff; }
.ex-side { flex: 1; padding-left: 260px; color: #777; }
.ex-side b { display: block; height: 26px; line-height: 26px; font-weight: normal; background: #eccdf8; }
.ex-side i { height: 24px; border-bottom: 1px solid #ccc; }
.ex-status { display: flex; gap: 18px; padding-left: 11px; line-height: 22px; color: #1e395b; }

/* ATTO */
.atto { left: -11px; top: -1px; width: 417px; height: 533px; padding: 0 5px 6px; background: #c5d5dd; }
.atto .title { height: 26px; }
.atto .caption { line-height: 26px; }
.atto-ico { width: 14px; height: 14px; margin: 6px 0 0 3px; }
.atto-body { flex: 1; display: flex; flex-direction: column; padding: 0 1px 0 5px; background: #f7f7f7; font-family: "Liberation Sans", sans-serif; }
.atto-menu { gap: 12px; padding-left: 2px; line-height: 18px; border-bottom: 1px solid #999; font-family: "Open Sans", sans-serif; }
.atto-tools { display: flex; align-items: center; height: 27px; padding-left: 2px; border-bottom: 1px solid #888; }
.atto-tools button { width: 20px; height: 20px; padding: 1px; border: 1px solid; border-color: #fff #777 #777 #fff; }
.atto-tools svg { width: 16px; height: 16px; }
.tgap { width: 6px; }
.tend { width: 1px; height: 24px; margin-left: 5px; background: #999; }
.atto-form { padding: 6px 11px 0 8px; }
.top { display: flex; justify-content: space-between; }
.left { padding-top: 1px; }
.row { display: flex; align-items: center; height: 17px; margin-bottom: 5px; white-space: nowrap; }
.lab { width: 65px; }
.combo { display: grid; grid-template-columns: 1fr 14px; height: 17px; background: #fff; border: 1px solid; border-color: #777 #ccc #ccc #777; outline: 1px solid #ddd; outline-offset: -2px; }
.combo select { grid-area: 1 / 1 / 2 / 3; appearance: none; padding-left: 3px; width: 100%; min-width: 0; outline: none; }
.combo.ind select { padding-left: 9px; }
.arr { grid-area: 1 / 2; margin: 1px; background: #f4f4f4; border: 1px solid; border-color: #fff #666 #666 #fff; display: grid; place-items: center; pointer-events: none; }
.arr::before { content: ""; border: 3px solid transparent; border-top: 4px solid #000; border-bottom: 0; }
.w66 { width: 66px; }
.w38 { width: 38px; }
.w182 { width: 182px; }
.to { width: 17px; text-align: center; }
.kb { padding-left: 8px; }
.check { display: flex; align-items: center; white-space: pre; }
.check input { appearance: none; width: 11px; height: 11px; margin-right: 5px; background: #fff; border: 1px solid; border-color: #777 #ccc #ccc #777; display: grid; place-items: center; }
.check input:checked::before { content: ""; width: 6px; height: 3px; margin-top: -2px; border: solid #000; border-width: 0 0 2px 2px; transform: rotate(-45deg); }
.fwa { margin-left: 17px; align-self: flex-start; }
.right { width: 110px; }
.dio { padding-left: 5px; height: 12px; margin-bottom: 3px; }
.modes { display: flex; flex-direction: column; height: 50px; padding: 3px 4px; border: 1px solid #bbb; }
.modes label { display: flex; align-items: center; height: 14px; white-space: pre; }
.modes input { appearance: none; width: 10px; height: 10px; margin-right: 5px; border-radius: 50%; border: 1px solid; border-color: #777 #ccc #ccc #777; background: #fff; }
.modes input:checked { background: radial-gradient(#000 0 2px, #fff 2px); }
.queue { display: flex; align-items: center; justify-content: space-between; margin-top: 3px; padding-left: 4px; }
.ctrl { display: block; line-height: 12px; margin-top: 5px; }
.startrow { display: flex; justify-content: space-between; }
.start { width: 60px; height: 18px; border: 1px solid; border-color: #999 #555 #555 #999; box-shadow: inset -1px -1px #999, inset 1px 1px #fff; }
.desc { display: flex; height: 39px; margin-top: 5px; background: #fff; border: 1px solid; border-color: #777 #ccc #ccc #777; }
.desc textarea { flex: 1; min-width: 0; padding: 2px; resize: none; overflow: hidden; outline: none; }
.dscroll { width: 15px; display: flex; flex-direction: column; justify-content: space-between; border-left: 1px solid #ccc; }
.dscroll button { height: 15px; display: grid; place-items: center; border: 1px solid #ccc; }
.dscroll svg, .np-scroll svg { width: 8px; height: 8px; fill: none; stroke: #777; stroke-width: 1; }
.results { min-width: 0; margin: 3px 12px 0 8px; padding: 0; height: 253px; border: 1px solid #bbb; }
.results legend { margin: 0 auto; padding: 0 2px; line-height: 12px; }
.legend { display: flex; align-items: center; height: 15px; padding-left: 116px; }
.legend i { width: 22px; height: 4px; margin-left: 6px; }
.legend i + span { margin-left: 20px; }
.legend b { font-weight: normal; }
.hw { margin-left: 60px; }
.hr { margin-left: 19px; }
.red { background: #f00; }
.green { background: #008000; }
.chart { display: grid; grid-template-columns: 32px 261px 38px 41px; height: 194px; }
.col { display: flex; flex-direction: column; height: 88px; margin-top: 3px; text-align: right; }
.col span { flex: 1; }
.sizes { padding-right: 3px; }
.plot { border: 1px solid #777; background: repeating-linear-gradient(90deg, transparent 0 25px, #11b 25px 26px) #fff; }
.bars { display: flex; flex-direction: column; height: 88px; margin-top: 3px; }
.pair { flex: 1; }
.pair i { height: 4px; }
.axis { display: flex; width: 286px; margin: 7px 0 0 19px; line-height: 12px; }
.axis span { flex: 1; text-align: center; }
.axlabel { width: 314px; text-align: center; line-height: 11px; }
.atto-status { display: flex; align-items: flex-end; gap: 3px; flex: 1; }
.atto-status span { flex: 1; line-height: 15px; font-family: "Open Sans", sans-serif; }
.atto-status i { width: 28px; height: 15px; border: 1px solid; border-color: #aaa #eee #eee #aaa; }
.atto-status svg { width: 10px; height: 10px; margin-left: 3px; }

/* CrystalDiskMark */
.crystal { left: 411px; right: 0; top: -1px; height: 324px; padding: 0 3px 5px 5px; background: #63cef0; border-color: #39788d; border-right: 0; }
.crystal .title { height: 23px; }
.crystal .caption { line-height: 20px; }
.crystal .ctl { border-color: #3d7f95; }
.crystal .ctl button { height: 14px; border-color: #3d7f95; }
.crystal .ctl .close { background: #c75050; }
.crystal .g-min { margin-top: 2px; }
.off .g-max { border-color: #24566a; border-width: 1px; border-top-width: 2px; }
.cdm-ico { width: 15px; height: 15px; margin: 1px 0 0 2px; }
.cdm-body { flex: 1; background: #fff; display: flex; flex-direction: column; }
.cdm-menu { gap: 12px; padding-left: 6px; line-height: 17px; }
.cdm-grid { display: grid; grid-template-columns: 54px 1fr 1fr; grid-auto-rows: 44px; gap: 3px; padding: 6px 12px 0; }
.cdm-head { grid-column: 2 / 4; padding-top: 3px; }
.pickers { display: flex; gap: 4px; }
.pick { display: grid; grid-template-columns: 1fr 14px; align-items: center; height: 18px; border: 1px solid #999; background: #fff; }
.pick select { grid-area: 1 / 1 / 2 / 3; appearance: none; width: 100%; height: 16px; padding-left: 2px; font-size: 11px; outline: none; }
.pick svg { grid-area: 1 / 2; width: 10px; height: 6px; fill: none; stroke: #222; stroke-width: 2; pointer-events: none; }
.p1 { width: 32px; }
.p2 { width: 70px; }
.p3 { flex: 1; }
.heads { display: grid; grid-template-columns: 1fr 1fr; text-align: center; font-family: "DejaVu Sans", sans-serif; font-size: 14px; line-height: 29px; color: #333; }
.gb { display: flex; flex-direction: column; align-items: center; justify-content: center; font-family: "DejaVu Sans", sans-serif; font-size: 12px; line-height: 17px; color: #2f5a2a; border: 1px solid #7fa57a; border-color: #a9c6a6 #6e8f6a #6e8f6a #a9c6a6; background: linear-gradient(#e6f3e4, #5bd91c 50%, #52e003 70%, #6cf007 88%, #c7f7a0); }
.gb.all { font-size: 14px; color: #333; background: linear-gradient(#edffe0, #8dff1c 45%, #7cfa00 75%, #b8ff79); }
.cell { display: grid; border: 1px solid #ccc; border-top-color: #e3e3e3; border-right-width: 2px; }
.cell > * { grid-area: 1 / 1; }
.cell i { background: linear-gradient(#eef3ec, #6ccb30 48%, #7ae028 70%, #8ff23a 88%, #c6fb96); border-right: 1px solid #4a9a2c; }
.cell b { align-self: center; padding-right: 9px; text-align: right; font-family: "DejaVu Sans", sans-serif; font-size: 34px; line-height: 42px; color: #444; }
.cdm-note { height: 27px; margin: 6px 12px 0; border: 1px solid #bbb; }

/* Notepad */
.notepad { left: 425px; top: 331px; width: 407px; height: 298px; padding: 0 6px 6px; }
.notepad .title { height: 25px; }
.notepad .caption { line-height: 25px; }
.np-ico { width: 14px; height: 14px; margin: 5px 0 0 2px; }
.np-body { flex: 1; display: flex; flex-direction: column; background: #fff; border: 1px solid #aaa; border-width: 0 0 1px 1px; }
.np-menu { gap: 12px; padding-left: 4px; line-height: 18px; border-bottom: 1px solid #888; }
.np-body textarea { flex: 1; resize: none; outline: none; padding: 2px 4px; overflow: hidden; font-family: "DejaVu Sans Mono", monospace; font-size: 12px; line-height: 14px; white-space: pre; color: #111; }
.np-scroll { height: 15px; border-top: 1px solid #ddd; }
.np-scroll button { width: 15px; height: 14px; display: grid; place-items: center; border-right: 1px solid #ccc; }

.mark { position: absolute; display: flex; gap: 6px; white-space: nowrap; color: #a9a9a9; opacity: .75; }
.mark svg { width: 40px; height: 42px; fill: #aaa; }
.mark div { display: flex; flex-direction: column; padding-top: 3px; }
.mark strong { font-weight: normal; font-size: 17px; line-height: 22px; }
.mark span { font-size: 12px; line-height: 17px; }
.mark1 { left: 574px; top: 542px; }
.mark2 { left: 612px; top: 589px; }

/* Taskbars */
.bar { display: flex; background: #63cef0; height: 34px; border-top: 1px solid #54737e; }
.bar > button { display: grid; place-items: center; flex: none; overflow: hidden; }
.i28 { width: 28px; height: 28px; }
.s20 { width: 20px; justify-items: start; }
.s44 { width: 44px; }
.s47 { width: 47px; }
.s50 { width: 51px; }
.s52 { width: 52px; }
.s54 { width: 54px; }
.open { background: #74d8ee; border: 1px solid #4596ae; border-width: 0 1px; }
.active { background: #a3dcf6; }
.amber { background: #e5b64a; }
.stack { box-shadow: 4px 0 #74d8ee, 5px 0 #4596ae; margin-right: 5px; overflow: visible; }
.shift { margin-left: 3px; }
.gap1 { margin-left: 1px; }
.lead { margin-left: 6px; }
.clip { width: 10px; height: 12px; margin: 12px 0 0 -6px; }
.lo { width: 28px; height: 28px; background: #000; color: #fff; font: bold 24px/28px "Liberation Sans", sans-serif; text-align: center; }
.tray { display: flex; gap: 6px; align-items: center; margin-left: auto; padding-right: 12px; }
.tray svg { width: 15px; height: 15px; }
.gapline { height: 6px; background: #fff; border-top: 1px solid #888; }
.host { height: 35px; }
.tail { width: 6px; margin-left: 1px; background: #9cdcf6; border: 1px solid #4596ae; border-width: 0 1px; }

.void { flex: 1; min-height: 90px; background: #000; }
.client { display: flex; align-items: center; justify-content: space-between; height: 43px; padding: 0 13px 4px 12px; border-top: 1px solid #777; background: linear-gradient(#484848, #1c1c1c 48%, #000 50%); }
.client svg { fill: #fff; }
</style>
